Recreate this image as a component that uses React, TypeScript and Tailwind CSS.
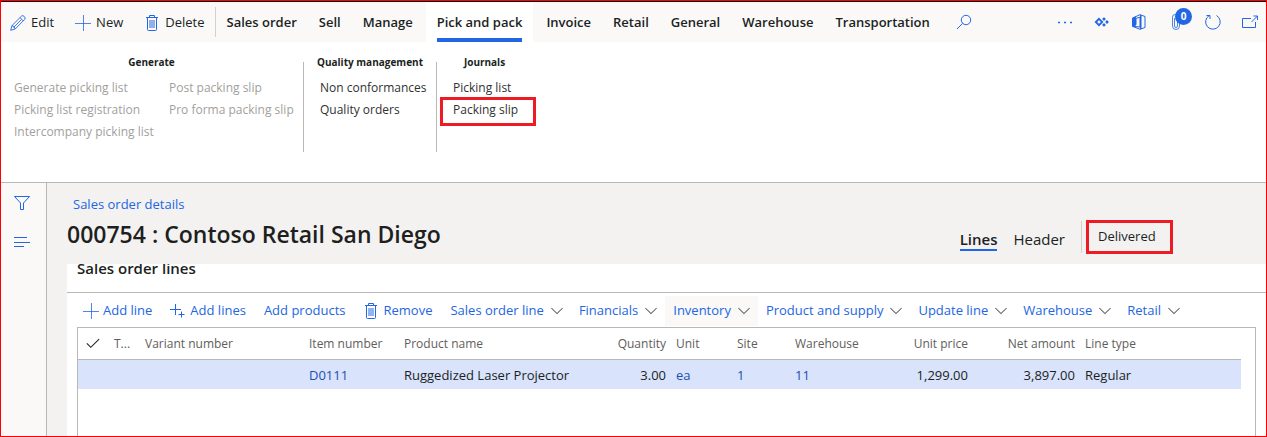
import type { ReactNode } from 'react';

const tabs = ['Sales order', 'Sell', 'Manage', 'Pick and pack', 'Invoice', 'Retail', 'General', 'Warehouse', 'Transportation'];

const menus = ['Sales order line', 'Financials', 'Inventory', 'Product and supply', 'Update line', 'Warehouse', 'Retail'];

const columns = [
  { label: 'T...', width: 'w-[31px]' },
  { label: 'Variant number', width: 'w-[164px]' },
  { label: 'Item number', width: 'w-[95px]', value: 'D0111', link: true },
  { label: 'Product name', width: 'w-[210px]', value: 'Ruggedized Laser Projector' },
  { label: 'Quantity', width: 'w-[62px]', value: '3.00', right: true },
  { label: 'Unit', width: 'w-[61px]', value: 'ea', link: true },
  { label: 'Site', width: 'w-[58px]', value: '1', link: true },
  { label: 'Warehouse', width: 'w-[93px]', value: '11', link: true },
  { label: 'Unit price', width: 'w-[90px]', value: '1,299.00', right: true },
  { label: 'Net amount', width: 'w-[107px]', value: '3,897.00', right: true },
  { label: 'Line type', width: '', value: 'Regular' },
];

const Icon = ({ children, className = 'size-4' }: { children: ReactNode; className?: string }) => (
  <svg viewBox="0 0 16 16" fill="none" stroke="currentColor" strokeWidth="1" className={`shrink-0 ${className}`} aria-hidden="true">
    {children}
  </svg>
);

const PencilIcon = () => (
  <Icon className="size-4 text-[#2266e3]">
    <path d="M.7 15.3l1.2-4.6L11.6 1q1.2-1 2.7.5t.5 2.8L5.2 14zM10 2.6l3.3 3.3M1.9 10.7Q4.8 11 5.2 14M3.5 12.5l8-8" strokeWidth=".9" />
  </Icon>
);

const PlusIcon = () => (
  <Icon className="size-4 text-[#2266e3]">
    <path d="M8.5 0v16M0 8.5h16" strokeWidth=".8" />
  </Icon>
);

const PlusPlusIcon = () => (
  <Icon className="size-4 text-[#2266e3]">
    <path d="M5.5 1v11M0 6.5h11M11.5 8.5v6M8.500 11.500h6" />
  </Icon>
);

const TrashIcon = () => (
  <Icon className="size-4 text-[#2266e3]">
    <path d="M2 2.500h12M5.500 2.500v-2h5v2M3.500 2.500v12q0 1 1 1h7q1 0 1-1v-12M6 5v8M8 5v8M10 5v8" />
  </Icon>
);

const ChevronIcon = () => (
  <Icon className="size-3 text-[#605e5c]">
    <path d="M.5 4L8 11.500 15.500 4" strokeWidth="1.400" />
  </Icon>
);

const GroupTitle = ({ children }: { children: ReactNode }) => (
  <h2 className="whitespace-nowrap text-center text-[10px] font-bold leading-4 text-[#201f1e]">{children}</h2>
);

const GroupLinks = ({ items, disabled = false }: { items: string[]; disabled?: boolean }) => (
  <div className="flex flex-col items-start">
    {items.map((item) => (
      <button
        key={item}
        disabled={disabled}
        className="h-[22px] whitespace-nowrap text-xs text-[#323130] disabled:text-[#a19f9d]"
      >
        {item}
      </button>
    ))}
  </div>
);

const ActionBar = () => (
  <header className="flex h-10 items-center bg-[#faf9f8] text-[13px] text-[#201f1e]">
    <div className="flex items-center gap-[21px] pl-[9px] pt-[2px]">
      <button className="flex items-center gap-[5px]">
        <PencilIcon />
        Edit
      </button>
      <button className="flex items-center gap-[5px]">
        <PlusIcon />
        New
      </button>
      <button className="flex items-center gap-[5px]">
        <TrashIcon />
        Delete
      </button>
    </div>
    <div className="ml-[10px] h-[30px] w-px bg-[#d2d0ce]" />
    <nav className="flex h-full">
      {tabs.map((tab) =>
        tab === 'Pick and pack' ? (
          <button key={tab} className="mx-[2px] bg-white px-[11px] font-semibold">
            <span className="flex h-10 items-center whitespace-nowrap border-b-4 border-[#2266e3] pt-[6px]">{tab}</span>
          </button>
        ) : (
          <button key={tab} className="whitespace-nowrap px-[11px] pt-[2px] font-semibold">
            {tab}
          </button>
        )
      )}
    </nav>
    <button aria-label="Search" className="ml-[15px] text-[#2266e3]">
      <Icon>
        <circle cx="10" cy="6" r="4.7" />
        <path d="M6.600 9.400L1 15" />
      </Icon>
    </button>
    <div className="ml-auto flex items-center gap-[21px] pr-2 text-[#2266e3]">
      <button aria-label="More">
        <Icon>
          <path d="M1 8.500h2M7 8.500h2M13 8.500h2" strokeWidth="1.600" />
        </Icon>
      </button>
      <button aria-label="Power Apps">
        <Icon>
          <path d="M5 4.800L8.200 8 5 11.200 1.800 8z" strokeWidth="1.800" />
          <path
            d="M10 3.200l1.900 1.900L10 7 8.100 5.100zM13 6.100L14.900 8 13 9.900 11.100 8zM10 9l1.900 1.900-1.900 1.900-1.900-1.900z"
            fill="currentColor"
            stroke="none"
          />
        </Icon>
      </button>
      <button aria-label="Office">
        <Icon>
          <path d="M1.500 4L9 .7l5 1.800v11l-5 1.800-7.500-3 7.500.7V3.200L5 4.400v6.400L1.500 12z" />
          <path d="M1.500 4L5 2.600v8.600l-3.500 1.300zM9 .7l1.500.5v13.600L9 15.300z" fill="currentColor" stroke="none" />
        </Icon>
      </button>
      <button aria-label="Attachments" className="relative">
        <Icon>
          <path d="M4.500 3v9a3.500 3.500 0 0 0 7 0V3M6.500 4v8a1.500 1.500 0 0 0 3 0V3a2.500 2.500 0 0 0-5 0" strokeWidth=".8" />
        </Icon>
        <span className="absolute -top-[6px] left-[7px] flex size-[17px] items-center justify-center rounded-full bg-[#2266e3] text-[10px] font-bold text-white">
          0
        </span>
      </button>
      <button aria-label="Refresh">
        <Icon>
          <path d="M11.500 1.500a7.300 7.300 0 1 1-7.500.2M1.500 1.500H5V5" />
        </Icon>
      </button>
      <button aria-label="Open in new window">
        <Icon>
          <path d="M9 4.500H.5v9h13V8M9.500 8l6-6M11.500 2h4v4" />
        </Icon>
      </button>
    </div>
  </header>
);

const Ribbon = () => (
  <section className="flex h-[141px] border-b border-[#bab8b7] pl-[13px] pt-3">
    <div className="flex w-[289px] flex-col gap-[7px] pr-[14px]">
      <GroupTitle>Generate</GroupTitle>
      <div className="flex">
        <div className="w-[155px] shrink-0">
          <GroupLinks disabled items={['Generate picking list', 'Picking list registration', 'Intercompany picking list']} />
        </div>
        <GroupLinks disabled items={['Post packing slip', 'Pro forma packing slip']} />
      </div>
    </div>
    <div className="mt-2 h-[90px] w-px bg-[#bab8b7]" />
    <div className="flex w-[132px] flex-col gap-[7px] px-3">
      <GroupTitle>Quality management</GroupTitle>
      <div className="pl-1">
        <GroupLinks items={['Non conformances', 'Quality orders']} />
      </div>
    </div>
    <div className="mt-2 h-[90px] w-px bg-[#bab8b7]" />
    <div className="relative flex w-[95px] flex-col gap-[7px] px-4">
      <GroupTitle>Journals</GroupTitle>
      <GroupLinks items={['Picking list', 'Packing slip']} />
      <div className="pointer-events-none absolute left-[3px] top-[43px] h-[29px] w-24 border-[3px] border-[#ed1c24]" />
    </div>
  </section>
);

const LinesToolbar = () => (
  <div className="flex h-[34px] items-center pt-[2px] text-[13px] text-[#2266e3]">
    <button className="flex items-center gap-1 whitespace-nowrap pl-4">
      <PlusIcon />
      Add line
    </button>
    <button className="flex items-center gap-1 whitespace-nowrap pl-[18px]">
      <PlusPlusIcon />
      Add lines
    </button>
    <button className="whitespace-nowrap pl-[18px]">Add products</button>
    <button className="flex items-center gap-1 whitespace-nowrap pl-[18px] pr-[10px]">
      <TrashIcon />
      Remove
    </button>
    {menus.map((menu) => (
      <button
        key={menu}
        className={`flex h-[30px] items-center gap-[7px] whitespace-nowrap px-2 ${menu === 'Inventory' ? 'bg-[#faf9f8]' : ''}`}
      >
        {menu}
        <ChevronIcon />
      </button>
    ))}
  </div>
);

const LinesTable = () => (
  <div className="mx-[10px] flex-1 border border-b-0 border-[#bab8b7] pr-[14px]">
    <table className="w-full table-fixed border-collapse text-left">
      <thead>
        <tr className="h-[31px] border-b border-[#bab8b7] text-xs text-[#605e5c]">
          <th className="w-[31px] pl-2" aria-label="Select">
            <Icon className="size-[14px] text-[#201f1e]">
              <path d="M1 8.500l4.500 4.500L15 3.500" strokeWidth="1.200" />
            </Icon>
          </th>
          {columns.map((col) => (
            <th
              key={col.label}
              className={`whitespace-nowrap px-[5px] pt-[2px] font-medium ${col.width} ${col.right ? 'text-right' : ''}`}
            >
              {col.label}
            </th>
          ))}
        </tr>
      </thead>
      <tbody>
        <tr className="h-[30px] bg-[#d9e3fb] text-[13px] text-[#201f1e]">
          <td />
          {columns.map((col) => (
            <td key={col.label} className={`whitespace-nowrap px-[5px] pt-[2px] ${col.right ? 'text-right' : ''}`}>
              {col.link ? <a href="#" className="text-[#1b50b3]">{col.value}</a> : col.value}
            </td>
          ))}
        </tr>
      </tbody>
    </table>
  </div>
);

const App = () => {
  return (
    <div className="flex min-h-screen flex-col border border-[#ff0000] bg-white font-['Open_Sans','Noto_Sans',sans-serif]">
      <div className="h-px bg-black" />
      <ActionBar />
      <Ribbon />
      <div className="flex flex-1">
        <aside className="flex w-[46px] flex-col items-center gap-[23px] border-r border-[#bab8b7] bg-[#faf9f8] pr-1 pt-3 text-[#2266e3]">
          <button aria-label="Filter">
            <Icon>
              <path d="M.5 1.500h15L9.500 8v6.500h-3V8z" />
            </Icon>
          </button>
          <button aria-label="Related information">
            <Icon>
              <path d="M0 3.500h13M0 8.500h16M0 12.500h10" />
            </Icon>
          </button>
        </aside>
        <main className="flex flex-1 flex-col bg-[#f3f2f1] pl-5">
          <div className="flex h-[81px] items-end justify-between pr-[93px]">
            <div className="flex flex-col gap-1 pb-[14px]">
              <a href="#" className="pl-[6px] text-[13px] leading-5 text-[#2266e3]">
                Sales order details
              </a>
              <h1 className="text-[23px] font-semibold leading-8 text-[#201f1e]">000754 : Contoso Retail San Diego</h1>
            </div>
            <div className="flex items-center pb-[10px] text-[#201f1e]">
              <button className="border-b-2 border-[#2266e3] pt-[6px] text-[15px] font-semibold leading-5">Lines</button>
              <button className="ml-4 border-b-2 border-transparent pt-[6px] text-[15px] leading-5">Header</button>
              <div className="ml-4 h-8 w-px bg-[#d2d0ce]" />
              <span className="ml-1 flex h-[34px] w-[87px] items-center border-[3px] border-[#ed1c24] pl-[9px] text-[13px]">
                Delivered
              </span>
            </div>
          </div>
          <section className="flex flex-1 flex-col bg-white">
            {/* section title is scrolled partly under the page header */}
            <div className="flex h-[29px] flex-col overflow-hidden border-b border-[#bab8b7] pl-[10px]">
              <h2 className="-mt-2 text-[15px] font-semibold leading-6 text-[#201f1e]">Sales order lines</h2>
            </div>
            <LinesToolbar />
            <LinesTable />
          </section>
        </main>
      </div>
    </div>
  );
};

export default App;
